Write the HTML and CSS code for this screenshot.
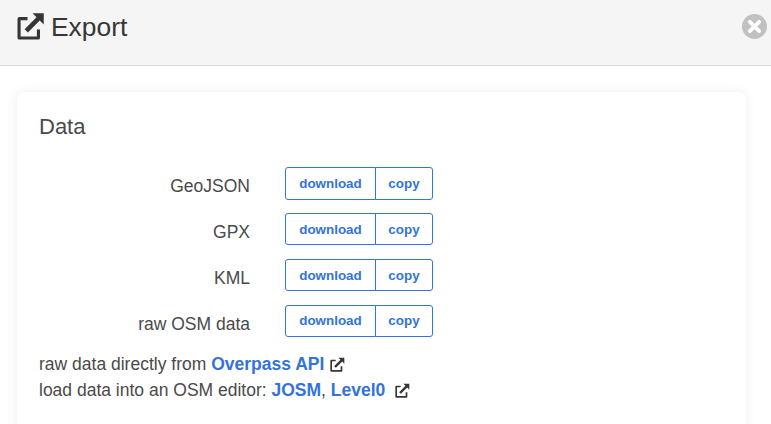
FILE: index.html
```html
<!DOCTYPE html>
<html lang="en">
<head>
<meta charset="utf-8">
<title>Export</title>
<link rel="stylesheet" href="styles.css">
</head>
<body>
<svg class="defs" width="0" height="0" aria-hidden="true">
  <symbol id="ext" viewBox="0 0 24 24">
    <path d="M10 4H3.500A1.500 1.500 0 0 0 2 5.500V20.500A1.500 1.500 0 0 0 3.500 22H18.500A1.500 1.500 0 0 0 20 20.500V14H17.500V19.500H4.500V6.500H10Z" fill="currentColor"/>
    <path d="M14 1H23V10L19.800 6.800 10.300 16.300 7.700 13.700 17.200 4.200Z" fill="currentColor"/>
  </symbol>
</svg>
<header class="head">
  <h1 class="title"><svg class="title-icon"><use href="#ext"/></svg>Export</h1>
  <button class="close" aria-label="Close">
    <svg viewBox="0 0 24 24" class="close-x"><path d="M7.500 7.500 16.500 16.500M16.500 7.500 7.500 16.500"/></svg>
  </button>
</header>
<main class="body">
  <section class="card">
    <h2 class="card-title">Data</h2>
    <div class="rows">
      <div class="row"><span class="label">GeoJSON</span><div class="group"><a class="btn btn-wide">download</a><a class="btn">copy</a></div></div>
      <div class="row"><span class="label">GPX</span><div class="group"><a class="btn btn-wide">download</a><a class="btn">copy</a></div></div>
      <div class="row"><span class="label">KML</span><div class="group"><a class="btn btn-wide">download</a><a class="btn">copy</a></div></div>
      <div class="row"><span class="label">raw OSM data</span><div class="group"><a class="btn btn-wide">download</a><a class="btn">copy</a></div></div>
    </div>
    <p class="note">raw data directly from <a class="link">Overpass API</a> <svg class="ext-icon"><use href="#ext"/></svg></p>
    <p class="note">load data into an OSM editor: <a class="link">JOSM</a>, <a class="link">Level0</a> <svg class="ext-icon ext-gap"><use href="#ext"/></svg></p>
  </section>
</main>
</body>
</html>
```

FILE: styles.css
```css
html, body {
  margin: 0;
  height: 424px;
  overflow: hidden;
  background: #fff;
  font-family: "Liberation Sans", Arial, sans-serif;
  color: #4a4a4a;
  font-size: 17.500px;
}
.defs { position: absolute; }
.head {
  height: 65px;
  background: #f5f5f5;
  border-bottom: 1px solid #dbdbdb;
  display: flex;
  align-items: center;
  justify-content: space-between;
  padding: 0 17px;
}
.title {
  margin: 0;
  display: flex;
  align-items: center;
  font-size: 26.400px;
  font-weight: 400;
  color: #363636;
  line-height: 30px;
  margin-top: -12px;
}
.title-icon { width: 30px; height: 30px; margin-left: -2.500px; margin-right: 6.500px; color: #363636; }
.close {
  width: 25px;
  height: 25px;
  border: 0;
  padding: 0;
  border-radius: 50%;
  background: #c1c1c1;
  margin-right: -13px;
  margin-top: -12px;
  display: flex;
  align-items: center;
  justify-content: center;
}
.close-x { width: 25px; height: 25px; fill: none; stroke: #fff; stroke-width: 3.600px; stroke-linecap: round; }
.body { padding: 26px 25px 0 17px; }
.card {
  background: #fff;
  border-radius: 8px;
  box-shadow: 0 0 12px rgba(10, 10, 10, 0.07);
  padding: 21px 22px 20px;
  height: 350px;
  box-sizing: border-box;
}
.card-title {
  margin: 0;
  font-size: 22px;
  font-weight: 400;
  line-height: 27px;
  color: #4a4a4a;
}
.rows { display: flex; flex-direction: column; gap: 13px; margin-top: 27px; }
.row { display: flex; align-items: flex-start; height: 33px; }
.label { width: 211px; text-align: right; margin-right: 35px; line-height: 26px; padding-top: 6px; }
.group { display: flex; height: 32px; }
.row:first-child .group { height: 33px; }
.btn {
  display: flex;
  align-items: center;
  justify-content: center;
  box-sizing: border-box;
  width: 58px;
  border: 1px solid #3273dc;
  border-radius: 0 3px 3px 0;
  margin-left: -1px;
  color: #3273dc;
  font-size: 13.400px;
  font-weight: 700;
  background: #fff;
}
.row:last-child .btn { padding-bottom: 2px; }
.btn-wide { width: 91px; margin-left: 0; border-radius: 3px 0 0 3px; }
.note { margin: 0; line-height: 26px; }
.rows + .note { margin-top: 13px; }
.link { color: #3273dc; font-weight: 700; }
.ext-icon { width: 16px; height: 16px; vertical-align: -3px; margin-left: 0; color: #363636; }
.ext-gap { margin-left: 4px; }
```
